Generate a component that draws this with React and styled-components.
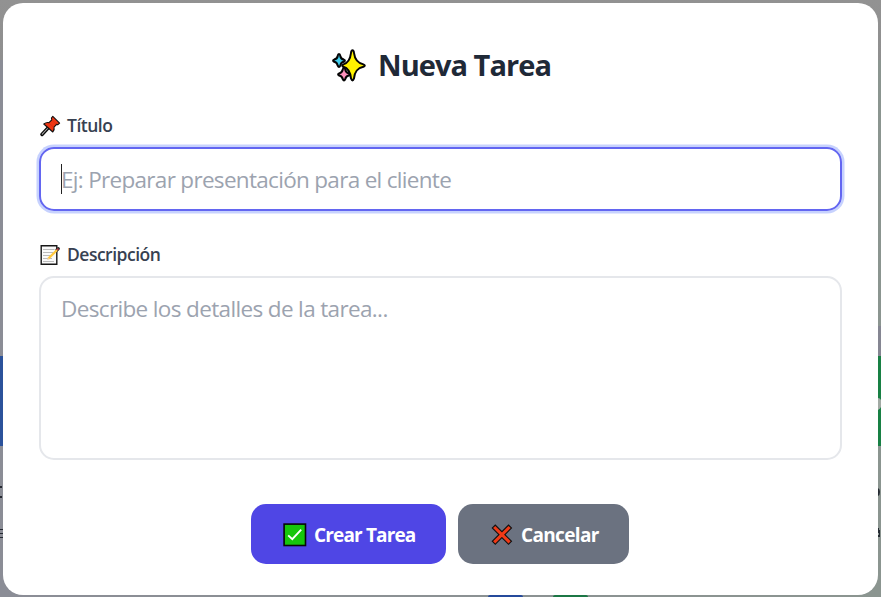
import React from "react";
import styled, { createGlobalStyle } from "styled-components";

const GlobalStyle = createGlobalStyle`
  *, *::before, *::after { box-sizing: border-box; }
  body { margin: 0; overflow: hidden; font-family: "Open Sans", "Noto Sans", sans-serif; }
`;

const Backdrop = styled.div`
  width: 881px;
  height: 597px;
  display: grid;
  grid-template-columns: 3px 875px 3px;
  grid-template-rows: 3px 592px 2px;
  background:
    linear-gradient(#929292, #8f8f8f) top / 100% 60px no-repeat,
    linear-gradient(90deg, #8b8d96, #8b9590);
`;

const Edge = styled.div`
  grid-column: ${(p) => p.$column};
  grid-row: 1 / 4;
  display: flex;
  flex-direction: column;
  overflow: hidden;
`;

const Strip = styled.div`
  flex: none;
  height: ${(p) => p.$height}px;
  background: ${(p) => p.$color || "transparent"};
`;

const Mark = styled.svg`
  display: block;
  flex: none;
`;

const BottomEdge = styled.div`
  grid-column: 2;
  grid-row: 3;
  display: flex;
  gap: 30px;
  padding-left: 485px;
`;

const Tab = styled.div`
  width: 35px;
  height: 2px;
  border-radius: 2px 2px 0 0;
  background: ${(p) => p.$color};
`;

const Dialog = styled.form`
  grid-column: 2;
  grid-row: 2;
  display: flex;
  flex-direction: column;
  padding: 41px 36px 31px;
  border-radius: 20px;
  background: #fff;
`;

const Heading = styled.h1`
  display: flex;
  align-items: center;
  justify-content: center;
  gap: 11px;
  height: 42px;
  margin: 0 0 29px;
  padding-left: 1px;
  color: #1f2937;
  font-size: 29px;
  font-weight: 700;
  letter-spacing: -0.95px;
  white-space: nowrap;
`;

const HeadingText = styled.span`
  padding-bottom: 2px;
`;

const Label = styled.label`
  display: flex;
  align-items: center;
  gap: 6px;
  height: 22px;
  margin-bottom: 10px;
  padding-left: 1px;
  color: #374151;
  font-size: 17.5px;
  font-weight: 600;
  letter-spacing: -0.5px;
`;

const LabelText = styled.span`
  padding-bottom: 2px;
`;

const TitleField = styled.div`
  display: flex;
  align-items: center;
  height: 64px;
  margin-bottom: 33px;
  padding: 0 19px 0 20px;
  border: 2px solid #6366f1;
  border-radius: 15px;
  box-shadow: 0 0 0 2.5px #c7d2fe;
`;

const Caret = styled.span`
  width: 1px;
  height: 30px;
  margin-right: -1px;
  background: #222;
`;

const TitleInput = styled.input`
  flex: 1;
  height: 48px;
  padding: 0;
  border: 0;
  outline: 0;
  background: transparent;
  font: 400 22.5px "Open Sans", sans-serif;
  letter-spacing: -0.69px;
  &::placeholder { color: #9ca3af; opacity: 1; }
`;

const DescriptionInput = styled.textarea`
  display: block;
  flex: none;
  width: 803px;
  height: 184px;
  margin: 0 0 44px;
  padding: 15px 20px;
  border: 2px solid #e5e7eb;
  border-radius: 15px;
  outline: 0;
  resize: none;
  font: 400 22.5px/32px "Open Sans", sans-serif;
  letter-spacing: -0.64px;
  &::placeholder { color: #9ca3af; opacity: 1; }
`;

const Actions = styled.div`
  display: flex;
  justify-content: center;
  gap: 12px;
  padding-right: 1px;
`;

const Button = styled.button`
  display: flex;
  align-items: center;
  width: ${(p) => p.$width}px;
  height: 60px;
  gap: 7px;
  padding: 1px 0 0 32px;
  border: 0;
  border-radius: 15px;
  color: #fff;
  background: ${(p) => p.$color};
  font: 700 19px "Open Sans", sans-serif;
  letter-spacing: ${(p) => p.$tracking}px;
  white-space: nowrap;
`;

const Icon = styled.svg`
  display: block;
  flex: none;
`;

const Sparkles = () => (
  <Icon width="36" height="36" viewBox="0 0 36 36" stroke="#050505" strokeWidth="2" strokeLinejoin="round">
    <path fill="#42cfee" d="M8 7Q9 7 9.3 9Q9.8 12 12.8 12.6Q15 13.6 12.8 14.8Q9.8 15.4 9.3 18.6Q8 21.4 6.7 18.6Q6.2 15.4 3.2 14.8Q1 13.6 3.2 12.6Q6.2 12 6.7 9Q7 7 8 7Z" />
    <path fill="#ff91bc" d="M13 20.8Q14 20.8 14.3 22.8Q14.8 25.6 17.8 26.4Q20 27.4 17.8 28.6Q14.8 29.2 14.3 32Q13 34.8 11.7 32Q11.2 29.2 8.2 28.6Q6 27.4 8.2 26.4Q11.2 25.6 11.7 22.8Q12 20.8 13 20.8Z" />
    <path fill="#fff200" d="M21.5 3.2Q22.7 3.2 23 6C23.8 12.6 26.4 16 32.4 17.4Q35.2 18.4 32.4 19.8C26.4 21.2 23.8 24.2 23 31.4Q21.5 35.4 20 31.4C19.2 24.2 17.1 21.2 12.4 19.8Q10 18.4 12.4 17.4C17.1 16 19.2 12.6 20 6Q20.3 3.2 21.5 3.2Z" />
  </Icon>
);

const Pin = () => (
  <Icon width="21" height="22" viewBox="0 0 21 22" strokeLinejoin="round" strokeLinecap="round">
    <path d="M8 13L2 19.5" stroke="#080808" strokeWidth="3.4" />
    <path d="M7.5 13.5L2.2 19.2" stroke="#aaa" strokeWidth="1.1" />
    <path fill="#ef3613" stroke="#101010" strokeWidth="1.1" d="M12.8 1.4L19.6 8.1L17.9 9.7L16.6 9.4L14 12.2Q14.8 14.6 12.8 17L3.8 9Q6.3 7 9 7.6L11.8 4.8L11.4 3Z" />
    <path d="M9 8.1L13.5 12.2M12 4.8L16.1 9" stroke="#c9301a" strokeWidth=".6" />
  </Icon>
);

const Memo = () => (
  <Icon width="21" height="22" viewBox="0 0 21 22">
    <path fill="#fafafa" stroke="#171717" strokeWidth="1.4" d="M1.2 1.7H16.8V20.3H1.2Z" />
    <path stroke="#bbb" strokeWidth="1" d="M3 5.5H14.5M3 8.5H13M3 11.5H11M3 14.5H12M3 17.5H14" />
    <path stroke="#222" strokeWidth="3.2" strokeLinecap="round" d="M16.8 6.2L18.3 4.7" />
    <path stroke="#ffc83d" strokeWidth="2.3" d="M8.2 14.8L17 6" />
    <path stroke="#c33b48" strokeWidth="1.6" d="M17 6L18.4 4.6" />
    <path fill="#f0cda0" d="M7 16L8 13.5L9.6 15Z" />
  </Icon>
);

const CheckBox = () => (
  <Icon width="24" height="24" viewBox="0 0 24 24" fill="none">
    <rect x="1.1" y="1.1" width="21.4" height="21.4" fill="#16c60c" stroke="#080808" strokeWidth="1.6" />
    <path d="M5.2 12.4L9.3 16.2L18.2 6.6" stroke="#fff" strokeWidth="1.9" />
  </Icon>
);

const Cross = () => (
  <Icon width="24" height="24" viewBox="0 0 24 24" fill="none">
    <path d="M3.4 3.2L20.4 20.2M20.4 3.2L3.4 20.2" stroke="#101010" strokeWidth="5.3" />
    <path d="M4.2 4L19.6 19.4M19.6 4L4.2 19.4" stroke="#f03a17" strokeWidth="3.1" />
  </Icon>
);

export default function App() {
  return (
    <>
      <GlobalStyle />
      <Backdrop>
        <Edge $column={1}>
          <Strip $height={356} />
          <Strip $height={90} $color="#2b529b" />
          <Strip $height={39} />
          <Mark width="3" height="55" viewBox="0 0 3 55">
            <path fill="#252932" d="M0 1H2V3H0ZM0 11H2V13H0ZM0 44H3V45H0ZM0 48H3V49H0ZM0 52H3V53H0Z" />
          </Mark>
        </Edge>
        <Edge $column={3}>
          <Strip $height={326} />
          <Strip $height={30} $color="#858692" />
          <Mark width="3" height="90" viewBox="0 0 3 90">
            <path fill="#188044" d="M0 0H3V90H0Z" />
            <path fill="#a2aaa4" d="M0 42Q2 42 3 44V51Q2 53 0 54Z" />
          </Mark>
          <Strip $height={40} />
          <Mark width="3" height="55" viewBox="0 0 3 55">
            <path fill="#252b32" d="M0 2Q2 3 2 6Q2 9 0 10ZM0 42H1V44H2V51H0V49H1V47H0Z" />
          </Mark>
        </Edge>
        <Dialog onSubmit={(e) => e.preventDefault()}>
          <Heading><Sparkles /><HeadingText>Nueva Tarea</HeadingText></Heading>
          <Label htmlFor="title"><Pin /><LabelText>Título</LabelText></Label>
          <TitleField>
            <Caret />
            <TitleInput id="title" placeholder="Ej: Preparar presentación para el cliente" />
          </TitleField>
          <Label htmlFor="description"><Memo /><LabelText>Descripción</LabelText></Label>
          <DescriptionInput id="description" placeholder="Describe los detalles de la tarea..." />
          <Actions>
            <Button type="submit" $width={195} $color="#4f46e5" $tracking={-0.85}><CheckBox />Crear Tarea</Button>
            <Button type="button" $width={171} $color="#6b7280" $tracking={-0.65}><Cross />Cancelar</Button>
          </Actions>
        </Dialog>
        <BottomEdge>
          <Tab $color="#254a9b" />
          <Tab $color="#1c7745" />
        </BottomEdge>
      </Backdrop>
    </>
  );
}
